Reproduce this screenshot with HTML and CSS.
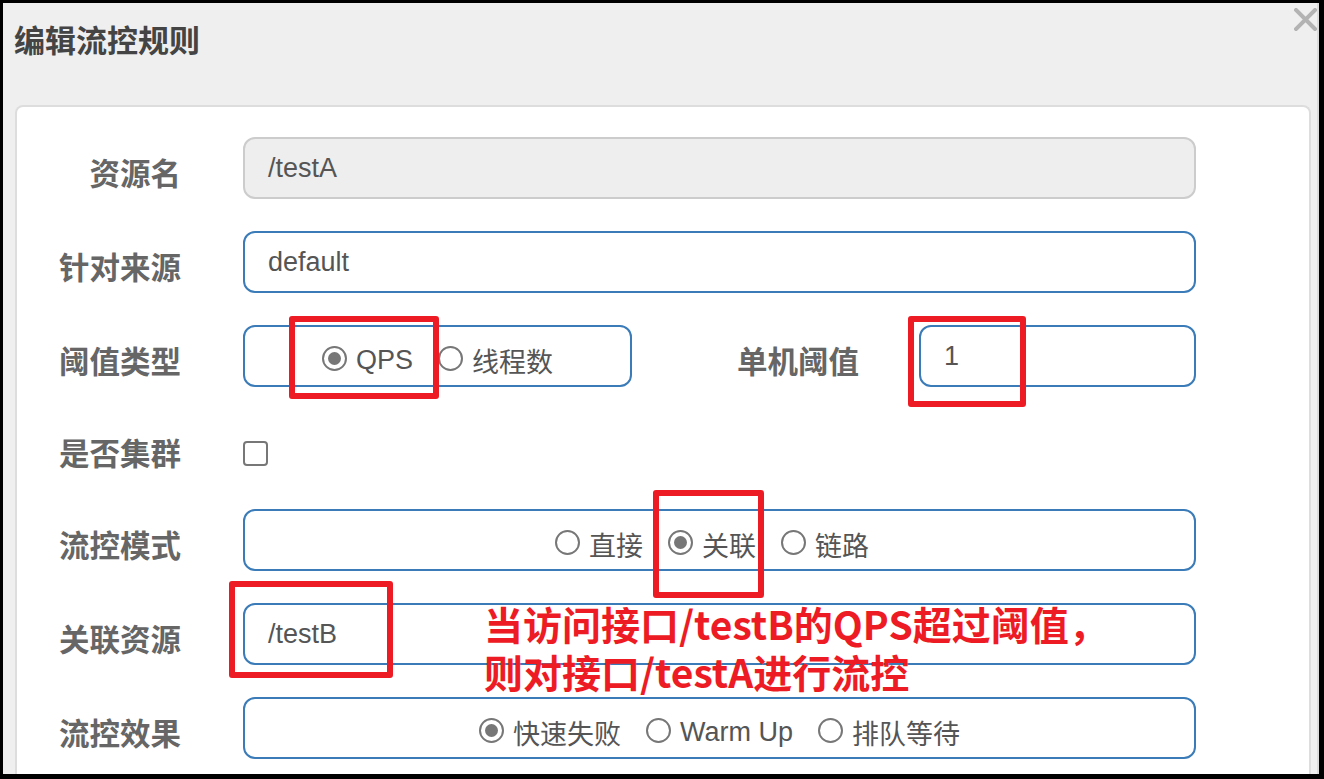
FILE: index.html
```html
<!DOCTYPE html>
<html lang="zh-CN">
<head>
<meta charset="utf-8">
<title>编辑流控规则</title>
<link rel="stylesheet" href="styles.css">
</head>
<body>
<div class="screen">
  <div class="dialog">
    <div class="dlg-head">
      <h1 class="dlg-title">编辑流控规则</h1>
      <span class="dlg-close" aria-label="关闭">
        <svg width="23" height="23" viewBox="0 0 23 23"><path d="M2 2 L21 21 M21 2 L2 21" stroke="#b3b3b3" stroke-width="4" stroke-linecap="square"/></svg>
      </span>
    </div>
    <div class="card">
      <div class="row">
        <div class="lbl">资源名</div>
        <div class="field is-disabled">/testA</div>
      </div>
      <div class="row">
        <div class="lbl">针对来源</div>
        <div class="field">default</div>
      </div>
      <div class="row">
        <div class="lbl">阈值类型</div>
        <div class="field field-type radios">
          <span class="opt"><span class="radio is-on"></span>QPS</span>
          <span class="opt"><span class="radio"></span>线程数</span>
        </div>
        <div class="lbl lbl-mid">单机阈值</div>
        <div class="field field-count">1</div>
      </div>
      <div class="row row-check">
        <div class="lbl">是否集群</div>
        <span class="checkbox"></span>
      </div>
      <div class="row">
        <div class="lbl">流控模式</div>
        <div class="field radios radios-mode">
          <span class="opt"><span class="radio"></span>直接</span>
          <span class="opt"><span class="radio is-on"></span>关联</span>
          <span class="opt"><span class="radio"></span>链路</span>
        </div>
      </div>
      <div class="row">
        <div class="lbl">关联资源</div>
        <div class="field">/testB</div>
      </div>
      <div class="row row-last">
        <div class="lbl">流控效果</div>
        <div class="field radios">
          <span class="opt"><span class="radio is-on"></span>快速失败</span>
          <span class="opt"><span class="radio"></span>Warm Up</span>
          <span class="opt"><span class="radio"></span>排队等待</span>
        </div>
      </div>
    </div>
  </div>

  <div class="mark mark-qps"></div>
  <div class="mark mark-count"></div>
  <div class="mark mark-mode"></div>
  <div class="mark mark-res"></div>
  <div class="note"><div class="note-line">当访问接口/testB的QPS超过阈值，</div><div class="note-line">则对接口/testA进行流控</div></div>
</div>
</body>
</html>
```

FILE: styles.css
```css
html, body {
  margin: 0;
  padding: 0;
  background: #000;
  overflow: hidden;
}

.screen {
  position: relative;
  width: 1324px;
  height: 779px;
  box-sizing: border-box;
  padding: 3px 5px 5px 3px;
  background: #000;
}

.dialog {
  height: 100%;
  box-sizing: border-box;
  background: #efefef;
  border-right: 2px solid #dcdcdc;
  display: flex;
  flex-direction: column;
  overflow: hidden;
}

.dlg-head {
  height: 102px;
  flex: none;
  box-sizing: border-box;
  padding: 18px 0 0 11px;
  display: flex;
  justify-content: space-between;
  align-items: flex-start;
}

.dlg-title {
  margin: 0;
  font: bold 31px/36px "Noto Sans CJK SC", sans-serif;
  color: #444;
}

.dlg-close {
  display: block;
  width: 23px;
  height: 23px;
  margin-top: -13px;
}

.dlg-close svg {
  display: block;
}

.card {
  flex: 1;
  margin: 0 6px 0 12px;
  padding-top: 30px;
  background: #fff;
  border: 2px solid #ddd;
  border-bottom: none;
  border-radius: 8px 8px 0 0;
}

.row {
  display: flex;
  align-items: center;
  height: 62px;
  margin-bottom: 32px;
}

.row-check {
  height: 58px;
}

.row-last {
  margin-bottom: 0;
}

.lbl {
  width: 164px;
  flex: none;
  margin-right: 62px;
  padding-top: 8px;
  text-align: right;
  font: bold 30.5px/40px "Noto Sans CJK SC", sans-serif;
  color: #666;
}

.lbl-mid {
  width: 227px;
  margin-right: 60px;
}

.field {
  width: 953px;
  height: 62px;
  flex: none;
  box-sizing: border-box;
  padding: 0 23px;
  border: 2px solid #3a7bb8;
  border-radius: 12px;
  display: flex;
  align-items: center;
  font: 27px "Liberation Sans", "Noto Sans CJK SC", sans-serif;
  color: #555;
}

.field.is-disabled {
  background: #eee;
  border-color: #ccc;
}

.field-type {
  width: 389px;
}

.field-count {
  width: 277px;
}

.radios {
  justify-content: center;
  padding-top: 8px;
}

.radios-mode {
  padding-right: 38px;
}

.opt {
  display: inline-flex;
  align-items: center;
  margin: 0 12.5px;
  white-space: nowrap;
}

.radio {
  width: 25px;
  height: 25px;
  box-sizing: border-box;
  margin-right: 9px;
  border: 2px solid #777;
  border-radius: 50%;
  display: inline-flex;
  align-items: center;
  justify-content: center;
  background: #fff;
  position: relative;
  top: -2px;
}

.radio.is-on::after {
  content: "";
  width: 13px;
  height: 13px;
  border-radius: 50%;
  background: #777;
}

.checkbox {
  width: 25px;
  height: 25px;
  box-sizing: border-box;
  margin-top: 11px;
  border: 2px solid #777;
  border-radius: 4px;
  background: #fff;
}

/* red annotation overlays */
.mark {
  position: absolute;
  box-sizing: border-box;
  border: 6px solid #ed1c24;
  border-radius: 3px;
}

.mark-qps {
  left: 289px;
  top: 316px;
  width: 150px;
  height: 83px;
}

.mark-count {
  left: 908px;
  top: 316px;
  width: 118px;
  height: 91px;
}

.mark-mode {
  left: 653px;
  top: 490px;
  width: 111px;
  height: 108px;
}

.mark-res {
  left: 229px;
  top: 581px;
  width: 164px;
  height: 97px;
}

.note {
  position: absolute;
  left: 484px;
  top: 599px;
  font: bold 39px/48px "Noto Sans CJK SC", sans-serif;
  color: #ed1c24;
  white-space: nowrap;
}

.note-line {
  height: 48px;
}
```
